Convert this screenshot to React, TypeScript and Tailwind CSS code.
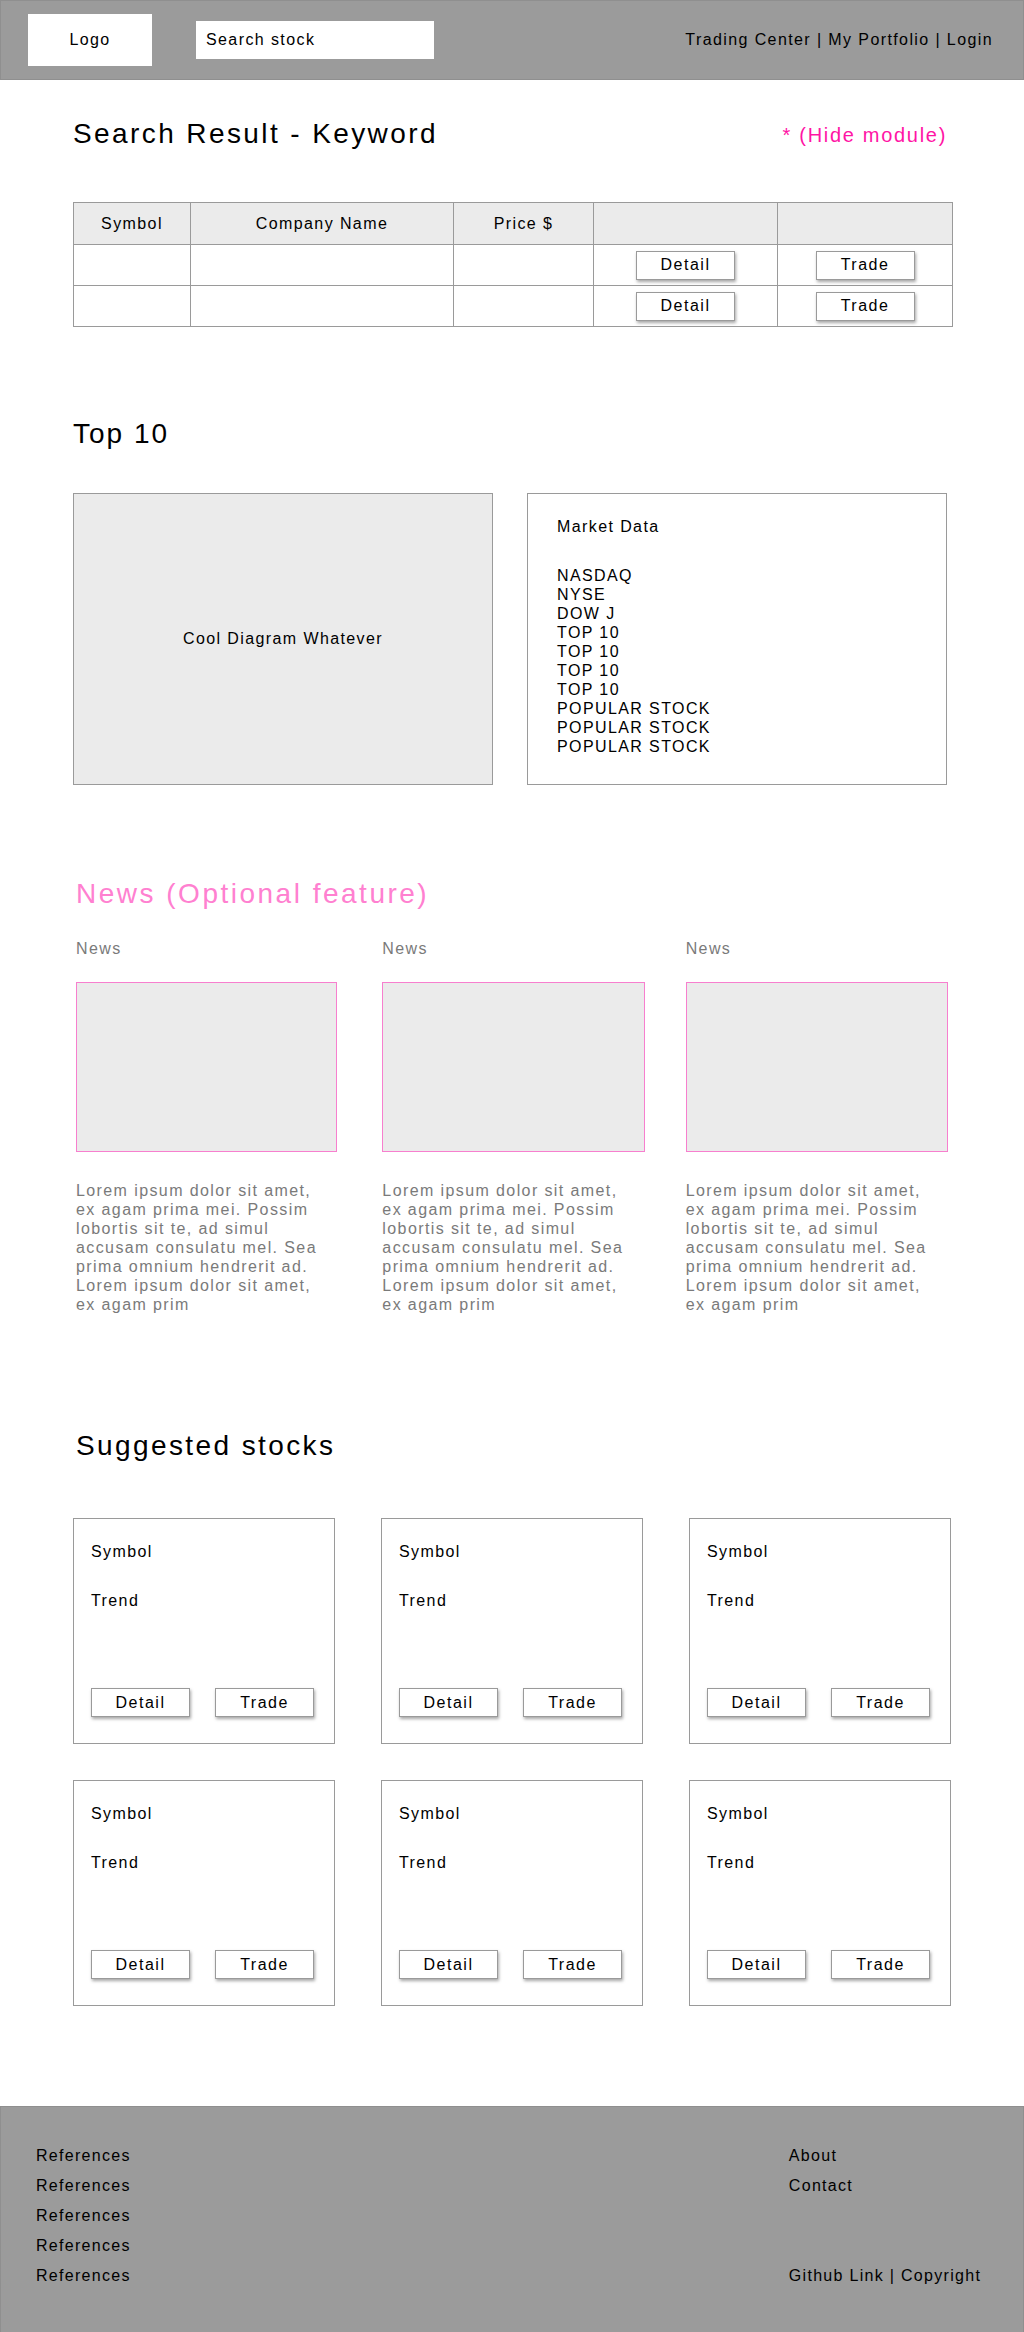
import React from "react";

const font = "font-['Liberation_Sans',Arial,sans-serif]";

function Btn({ label }: { label: string }) {
  return (
    <button className="w-[99px] h-[29px] bg-white border border-[#9a9a9a] shadow-[1px_2px_3px_rgba(0,0,0,0.35)] text-[16px] tracking-[1.5px] text-black leading-none">
      {label}
    </button>
  );
}

const lorem = [
  "Lorem ipsum dolor sit amet,",
  "ex agam prima mei. Possim",
  "lobortis sit te, ad simul",
  "accusam consulatu mel. Sea",
  "prima omnium hendrerit ad.",
  "Lorem ipsum dolor sit amet,",
  "ex agam prim",
];

const market = [
  "NASDAQ",
  "NYSE",
  "DOW J",
  "TOP 10",
  "TOP 10",
  "TOP 10",
  "TOP 10",
  "POPULAR STOCK",
  "POPULAR STOCK",
  "POPULAR STOCK",
];

function StockCard() {
  return (
    <div className="w-[262px] h-[226px] border border-[#9a9a9a] flex flex-col pt-[23px] pb-[26px] px-[17px] text-[16px] leading-[19px] tracking-[1.4px]">
      <div>Symbol</div>
      <div className="mt-[30px]">Trend</div>
      <div className="mt-auto flex gap-[25px]">
        <Btn label="Detail" />
        <Btn label="Trade" />
      </div>
    </div>
  );
}

function NewsItem({ className }: { className: string }) {
  return (
    <div className={`${className} text-[16px] leading-[19px] tracking-[1.4px] text-[#7a7a7a]`}>
      <div>News</div>
      <div className="mt-[24px] h-[170px] bg-[#ebebeb] border border-[#f77fce]"></div>
      <div className="mt-[29px]">
        {lorem.map((l, j) => (
          <div key={j}>{l}</div>
        ))}
      </div>
    </div>
  );
}

export default function App() {
  return (
    <div className={`${font} w-[1024px] min-h-[2332px] bg-white text-black flex flex-col`}>
      {/* header */}
      <header className="h-[80px] bg-[#9b9b9b] border border-[#8f8f8f] flex items-center pl-[27px] pr-[30px] text-[16px] tracking-[1.4px]">
        <div className="w-[124px] h-[52px] bg-white flex items-center justify-center">Logo</div>
        <div className="ml-[44px] w-[238px] h-[38px] bg-white flex items-center pl-[10px]">Search stock</div>
        <nav className="ml-auto">Trading Center | My Portfolio | Login</nav>
      </header>

      <main className="px-[73px] flex flex-col">
        {/* search result */}
        <div className="mt-[37px] flex items-center justify-between pr-[4px]">
          <h1 className="text-[28px] leading-[34px] tracking-[2.4px]">Search Result - Keyword</h1>
          <span className="mt-[2px] text-[20px] tracking-[1.7px] text-[#ff14a5]">* (Hide module)</span>
        </div>

        <table className="mt-[51px] w-[880px] border-collapse text-[16px] tracking-[1.4px]">
          <thead>
            <tr className="h-[42px] bg-[#ebebeb]">
              <th className="w-[117px] border border-[#9a9a9a] font-normal">Symbol</th>
              <th className="w-[263px] border border-[#9a9a9a] font-normal">Company Name</th>
              <th className="w-[140px] border border-[#9a9a9a] font-normal">Price $</th>
              <th className="w-[184px] border border-[#9a9a9a] font-normal"></th>
              <th className="border border-[#9a9a9a] font-normal"></th>
            </tr>
          </thead>
          <tbody>
            {[0, 1].map((i) => (
              <tr key={i} className="h-[41px]">
                <td className="border border-[#9a9a9a]"></td>
                <td className="border border-[#9a9a9a]"></td>
                <td className="border border-[#9a9a9a]"></td>
                <td className="border border-[#9a9a9a] text-center">
                  <Btn label="Detail" />
                </td>
                <td className="border border-[#9a9a9a] text-center">
                  <Btn label="Trade" />
                </td>
              </tr>
            ))}
          </tbody>
        </table>

        {/* top 10 */}
        <h2 className="mt-[90px] text-[28px] leading-[34px] tracking-[2px]">Top 10</h2>
        <div className="mt-[42px] flex gap-[34px]">
          <div className="w-[420px] h-[292px] bg-[#ebebeb] border border-[#9a9a9a] flex items-center justify-center text-[16px] tracking-[1.4px]">
            Cool Diagram Whatever
          </div>
          <div className="w-[420px] h-[292px] border border-[#9a9a9a] pl-[29px] pt-[23px] text-[16px] leading-[19px] tracking-[1.4px]">
            <div>Market Data</div>
            <div className="mt-[30px]">
              {market.map((m, i) => (
                <div key={i}>{m}</div>
              ))}
            </div>
          </div>
        </div>

        {/* news */}
        <section className="ml-[3px] mr-[3px]">
          <h2 className="mt-[92px] text-[28px] leading-[34px] tracking-[2.5px] text-[#ff80d0]">News (Optional feature)</h2>
          <div className="mt-[28px] flex">
            <NewsItem className="w-[262px]" />
            <NewsItem className="ml-[45px] w-[263px]" />
            <NewsItem className="ml-[41px] w-[263px]" />
          </div>
        </section>

        {/* suggested */}
        <h2 className="ml-[3px] mt-[115px] text-[28px] leading-[34px] tracking-[2.4px]">Suggested stocks</h2>
        <div className="mt-[55px] flex flex-col gap-[36px]">
          {[0, 1].map((r) => (
            <div key={r} className="flex justify-between">
              <StockCard />
              <StockCard />
              <StockCard />
            </div>
          ))}
        </div>
      </main>

      {/* footer */}
      <footer className="mt-[100px] h-[229px] bg-[#9b9b9b] border border-[#8f8f8f] flex pl-[35px] pt-[34px] text-[16px] leading-[30px] tracking-[1.3px]">
        <div className="flex flex-col">
          <div>References</div>
          <div>References</div>
          <div>References</div>
          <div>References</div>
          <div>References</div>
        </div>
        <div className="ml-[658px] flex flex-col">
          <div>About</div>
          <div>Contact</div>
          <div className="h-[60px]"></div>
          <div>Github Link | Copyright</div>
        </div>
      </footer>
    </div>
  );
}
